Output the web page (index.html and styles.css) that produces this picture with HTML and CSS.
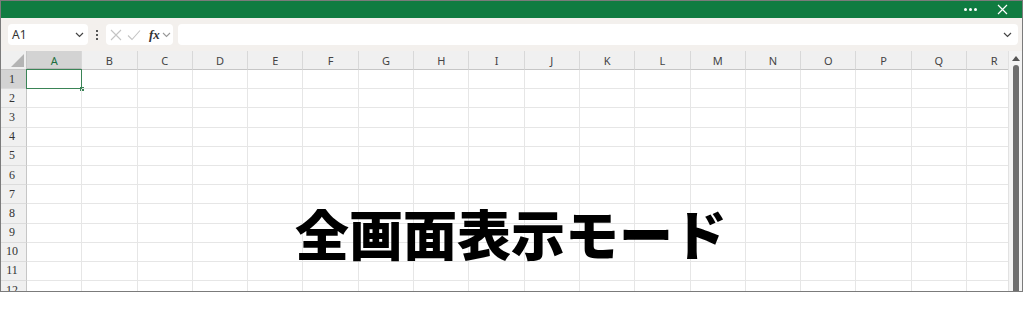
FILE: index.html
```html
<!DOCTYPE html>
<html lang="ja">
<head>
<meta charset="utf-8">
<link rel="stylesheet" href="styles.css">
</head>
<body>
<div class="window">
  <div class="titlebar">
    <span class="more"><i></i><i></i><i></i></span>
    <svg class="close" width="11" height="11" viewBox="0 0 11 11"><path d="M1 1L10 10M10 1L1 10" stroke="#fff" stroke-width="1.2" fill="none"/></svg>
  </div>
  <div class="formula">
    <div class="namebox"><span>A1</span>
      <svg class="chev" width="9" height="6" viewBox="0 0 9 6"><path d="M1 1L4.5 4.5L8 1" stroke="#444" stroke-width="1.2" fill="none"/></svg>
    </div>
    <div class="dots"><i></i><i></i><i></i></div>
    <div class="fbtns">
      <svg width="12" height="12" viewBox="0 0 12 12"><path d="M1 1L11 11M11 1L1 11" stroke="#c4c4c4" stroke-width="1.1" fill="none"/></svg>
      <svg width="14" height="12" viewBox="0 0 14 12"><path d="M1 6.5L5 10.5L13 1.5" stroke="#c4c4c4" stroke-width="1.1" fill="none"/></svg>
      <span class="fx">fx</span>
      <svg width="9" height="6" viewBox="0 0 9 6"><path d="M1 1L4.5 4.5L8 1" stroke="#999" stroke-width="1.1" fill="none"/></svg>
    </div>
    <div class="finput">
      <svg class="chev" width="9" height="6" viewBox="0 0 9 6"><path d="M1 1L4.5 4.5L8 1" stroke="#444" stroke-width="1.2" fill="none"/></svg>
    </div>
  </div>
  <div class="sheet">
    <div class="grid" id="grid">
      <div class="corner"></div>
      <div class="ch sel">A</div><div class="ch">B</div><div class="ch">C</div><div class="ch">D</div><div class="ch">E</div><div class="ch">F</div><div class="ch">G</div><div class="ch">H</div><div class="ch">I</div><div class="ch">J</div><div class="ch">K</div><div class="ch">L</div><div class="ch">M</div><div class="ch">N</div><div class="ch">O</div><div class="ch">P</div><div class="ch">Q</div><div class="ch">R</div>
    </div>
    <div class="scroll">
      <div class="up"></div>
      <div class="thumb"></div>
    </div>
    <div class="title">全画面表示モード</div>
  </div>
</div>
<script>
  var g = document.getElementById('grid');
  var html = '';
  for (var r = 1; r <= 12; r++) {
    html += '<div class="rh' + (r === 1 ? ' sel' : '') + '">' + r + '</div>';
    for (var c = 0; c < 18; c++) {
      html += '<div class="cell' + (r === 1 && c === 0 ? ' active' : '') + '">' + (r === 1 && c === 0 ? '<span class="handle"></span>' : '') + '</div>';
    }
  }
  g.insertAdjacentHTML('beforeend', html);
</script>
</body>
</html>
```

FILE: styles.css
```css
* { box-sizing: border-box; }
html, body { margin: 0; padding: 0; background: #fff; }
body { font-family: "Noto Sans", "Open Sans", sans-serif; }

.window {
  width: 1023px;
  height: 292px;
  border: 1px solid #7b7b7b;
  display: flex;
  flex-direction: column;
  overflow: hidden;
}

.titlebar {
  height: 17px;
  flex: none;
  background: #107c41;
  display: flex;
  align-items: center;
  justify-content: flex-end;
  padding-right: 14px;
  gap: 20px;
}
.more { display: flex; gap: 2px; }
.more i { display: block; width: 3px; height: 3px; border-radius: 50%; background: #fff; }
.close { display: block; }

.formula {
  height: 33px;
  flex: none;
  background: #f3f0ed;
  display: flex;
  align-items: center;
  padding: 0 4px 0 7px;
  gap: 2px;
}
.namebox {
  width: 80px;
  height: 21px;
  background: #fff;
  border-radius: 4px;
  display: flex;
  align-items: center;
  justify-content: space-between;
  padding: 0 4px 0 4px;
  font-size: 12px;
  color: #333;
}
.dots { width: 14px; display: flex; flex-direction: column; align-items: center; gap: 2px; }
.dots i { width: 2px; height: 2px; background: #555; display: block; }
.fbtns {
  width: 67px;
  height: 21px;
  background: #fff;
  border-radius: 4px;
  display: flex;
  align-items: center;
  gap: 5px;
  padding-left: 4px;
}
.fx {
  font-family: "Liberation Serif", serif;
  font-style: italic;
  font-weight: bold;
  font-size: 13px;
  color: #333;
  margin-left: 3px;
  margin-right: -3px;
}
.finput {
  flex: 1;
  height: 21px;
  background: #fff;
  border-radius: 4px;
  display: flex;
  align-items: center;
  justify-content: flex-end;
  padding-right: 6px;
  margin-left: 3px;
}

.sheet {
  flex: 1;
  position: relative;
  display: flex;
  overflow: hidden;
}
.grid {
  width: 1007px;
  flex: none;
  display: grid;
  grid-template-columns: 26px repeat(18, 55.3px);
  grid-template-rows: 19px repeat(12, 19.2px);
  overflow: hidden;
  font-size: 11px;
  color: #444;
}
.corner {
  background: #f0f0f0;
  border-right: 1px solid #c6c6c6;
  border-bottom: 1px solid #c6c6c6;
  position: relative;
}
.corner::after {
  content: "";
  position: absolute;
  right: 2px;
  bottom: 2px;
  width: 0; height: 0;
  border-left: 13px solid transparent;
  border-bottom: 13px solid #b4b4b4;
}
.ch {
  background: #f0f0f0;
  border-right: 1px solid #d8d8d8;
  border-bottom: 1px solid #c6c6c6;
  display: flex;
  align-items: center;
  justify-content: center;
  padding-top: 1px;
}
.ch.sel { background: #d3d3d3; color: #1e6f3f; border-bottom: 2px solid #b8b8b8; }
.rh {
  background: #f0f0f0;
  border-right: 1px solid #c6c6c6;
  border-bottom: 1px solid #dcdcdc;
  display: flex;
  align-items: center;
  justify-content: center;
  padding-right: 3px;
  font-family: "Liberation Serif", "DejaVu Serif", serif;
  font-size: 12px;
  color: #333;
}
.rh.sel { background: #d3d3d3; }
.cell {
  border-right: 1px solid #e6e6e6;
  border-bottom: 1px solid #e6e6e6;
  position: relative;
}
.cell.active {
  border: 1.5px solid #3a8456;
  margin: -1px 0 0 -1px;
}
.handle {
  position: absolute;
  right: -3px;
  bottom: -3px;
  width: 4px;
  height: 4px;
  background: #3a8456;
}

.scroll {
  flex: 1;
  background: #f4f4f4;
  border-left: 1px solid #e2e2e2;
  display: flex;
  flex-direction: column;
  align-items: center;
  padding-top: 5px;
}
.up {
  width: 0; height: 0;
  border-left: 4px solid transparent;
  border-right: 4px solid transparent;
  border-bottom: 5px solid #555;
}
.thumb {
  margin-top: 4px;
  width: 6px;
  flex: 1;
  background: #6e6e6e;
  border-radius: 3px 3px 0 0;
}

.title {
  position: absolute;
  left: 0;
  width: 1020px;
  top: 155px;
  text-align: center;
  font-family: "Noto Sans CJK JP", sans-serif;
  font-weight: 900;
  font-size: 54px;
  line-height: 1;
  color: #000;
  letter-spacing: 0;
}
```
